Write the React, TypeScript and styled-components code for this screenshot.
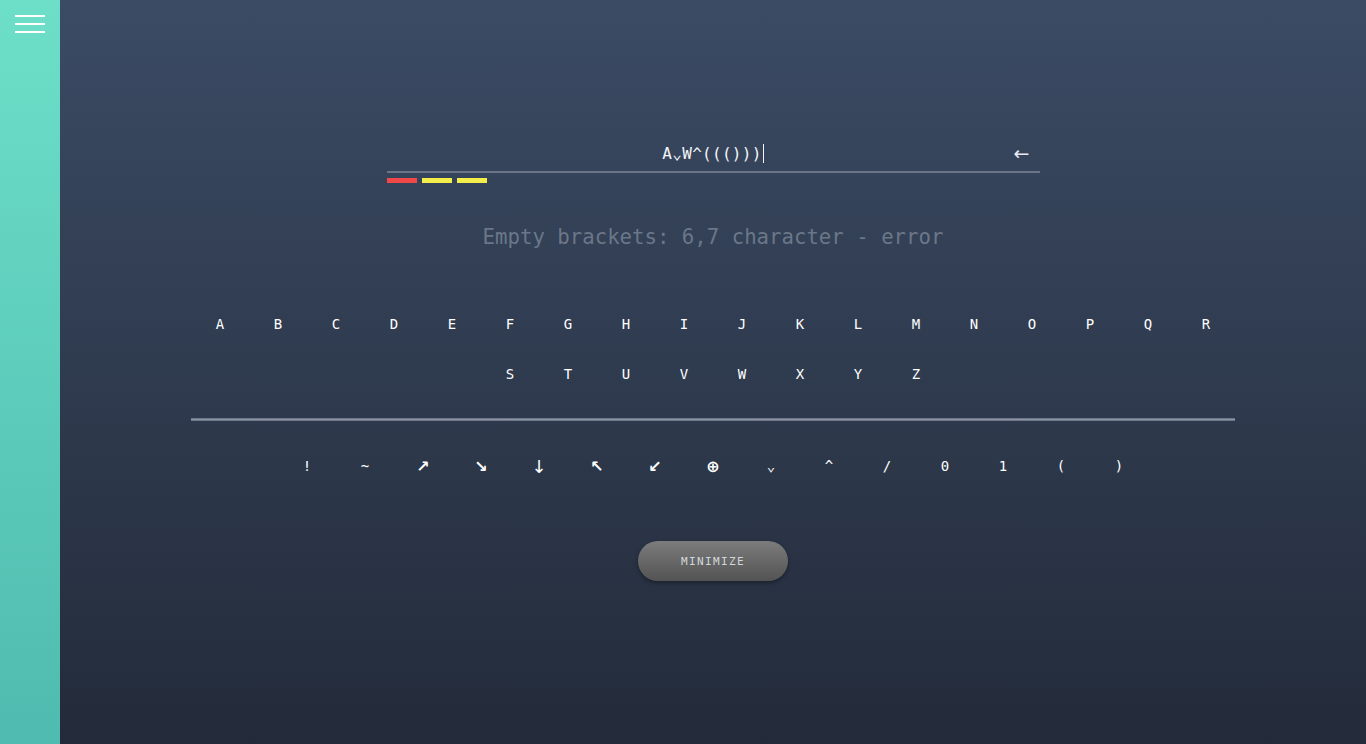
import React from "react";
import styled, { createGlobalStyle } from "styled-components";

const Global = createGlobalStyle`
  html, body { margin: 0; padding: 0; height: 100%; }
  body { font-family: "DejaVu Sans Mono", "Liberation Mono", monospace; overflow: hidden; }
  #root { height: 100%; }
`;

const Page = styled.div`
  display: flex;
  width: 100vw;
  height: 100vh;
`;

const Sidebar = styled.aside`
  width: 60px;
  flex: none;
  background: linear-gradient(to bottom, #6ddfc8, #4fbbb0);
  padding: 15px;
  box-sizing: border-box;
`;

const Burger = styled.div`
  display: flex;
  flex-direction: column;
  gap: 6px;
  width: 30px;
`;

const BurgerLine = styled.span`
  display: block;
  height: 2px;
  background: #ffffff;
`;

const Main = styled.main`
  flex: 1;
  background: linear-gradient(to bottom, #3b4b64, #232b3a);
  display: flex;
  flex-direction: column;
  align-items: center;
  padding-top: 140px;
  box-sizing: border-box;
`;

const InputWrap = styled.div`
  position: relative;
  width: 50%;
`;

const InputField = styled.div`
  height: 33px;
  padding-bottom: 5px;
  box-sizing: border-box;
  border-bottom: 2px solid #6b7587;
  display: flex;
  align-items: center;
  justify-content: center;
  color: #f2f4f7;
  font-size: 16px;
  letter-spacing: 0.3px;
`;

const Caret = styled.span`
  display: inline-block;
  width: 1px;
  height: 19px;
  background: #f2f4f7;
  margin-left: 1px;
`;

const Backspace = styled.span`
  position: absolute;
  right: 10px;
  top: 0;
  height: 26px;
  display: flex;
  align-items: center;
  color: #e8ecf2;
  font-size: 19px;
  font-family: "DejaVu Sans", sans-serif;
`;

const Bars = styled.div`
  display: flex;
  gap: 5px;
  margin-top: 5px;
`;

const Bar = styled.span<{ $color: string }>`
  width: 30px;
  height: 5px;
  background: ${(p) => p.$color};
`;

const Message = styled.div`
  margin-top: 39px;
  color: #6b7789;
  font-size: 20.7px;
  line-height: 30px;
`;

const Keyboard = styled.div`
  width: 80%;
  margin-top: 47px;
  display: flex;
  flex-direction: column;
  align-items: center;
`;

const KeyRow = styled.div`
  display: flex;
  flex-wrap: wrap;
  justify-content: center;
  width: 100%;
`;

const Key = styled.button<{ $glyph?: boolean; $thin?: boolean }>`
  width: 58px;
  height: 50px;
  border: none;
  background: transparent;
  color: #ffffff;
  font-family: ${(p) => (p.$glyph ? '"DejaVu Sans", sans-serif' : '"DejaVu Sans Mono", monospace')};
  font-size: ${(p) => (p.$glyph ? (p.$thin ? "18px" : "16px") : "14px")};
  font-weight: ${(p) => (p.$glyph && !p.$thin ? "bold" : "normal")};
  padding: 0;
  display: flex;
  align-items: center;
  justify-content: center;
  cursor: pointer;
`;

const Divider = styled.div`
  width: 100%;
  height: 3px;
  margin: 19px 0 20px;
  background: linear-gradient(to bottom, #5f6a7c, #8a93a3, #5f6a7c);
`;

const MinimizeButton = styled.button`
  margin-top: 50px;
  width: 150px;
  height: 40px;
  border: none;
  border-radius: 20px;
  background: linear-gradient(to bottom, #7c7c7c, #535353);
  box-shadow: 0 2px 4px rgba(0, 0, 0, 0.35);
  color: #d2d8dc;
  font-family: "DejaVu Sans Mono", monospace;
  font-size: 11px;
  letter-spacing: 1.4px;
  cursor: pointer;
`;

const letters = "ABCDEFGHIJKLMNOPQRSTUVWXYZ".split("");
const symbols: { s: string; glyph?: boolean; thin?: boolean }[] = [
  { s: "!" },
  { s: "~" },
  { s: "↗", glyph: true },
  { s: "↘", glyph: true },
  { s: "↓", glyph: true, thin: true },
  { s: "↖", glyph: true },
  { s: "↙", glyph: true },
  { s: "⊕", glyph: true },
  { s: "⌄" },
  { s: "^" },
  { s: "/" },
  { s: "0" },
  { s: "1" },
  { s: "(" },
  { s: ")" },
];

export default function App() {
  return (
    <Page>
      <Global />
      <Sidebar>
        <Burger>
          <BurgerLine />
          <BurgerLine />
          <BurgerLine />
        </Burger>
      </Sidebar>
      <Main>
        <InputWrap>
          <InputField>
            A⌄W^((()))
            <Caret />
          </InputField>
          <Backspace>←</Backspace>
          <Bars>
            <Bar $color="#f04848" />
            <Bar $color="#f4ee4a" />
            <Bar $color="#f4ee4a" />
          </Bars>
        </InputWrap>
        <Message>Empty brackets: 6,7 character - error</Message>
        <Keyboard>
          <KeyRow>
            {letters.map((l) => (
              <Key key={l}>{l}</Key>
            ))}
          </KeyRow>
          <Divider />
          <KeyRow>
            {symbols.map((k) => (
              <Key key={k.s} $glyph={k.glyph} $thin={k.thin}>
                {k.s}
              </Key>
            ))}
          </KeyRow>
        </Keyboard>
        <MinimizeButton>MINIMIZE</MinimizeButton>
      </Main>
    </Page>
  );
}
